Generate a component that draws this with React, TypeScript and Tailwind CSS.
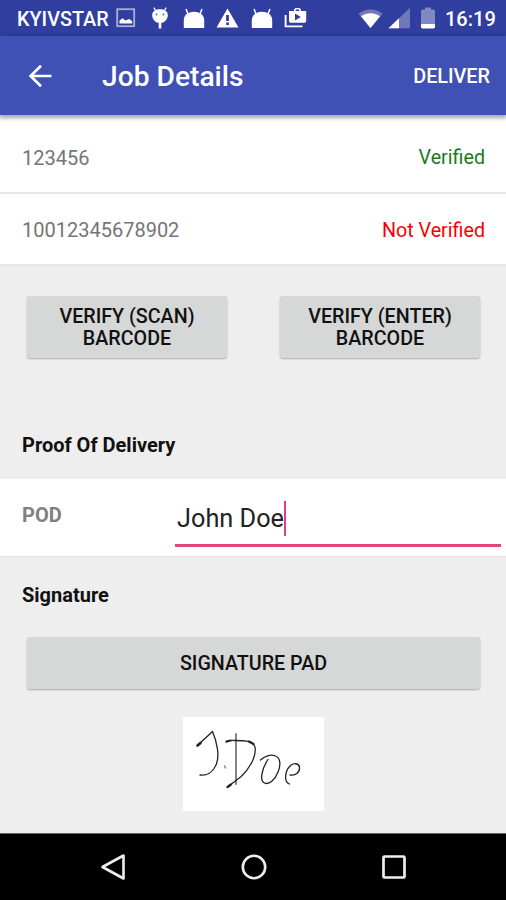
import { ReactNode } from "react";

type Parcel = {
  code: string;
  verified: boolean;
};

const parcels: Parcel[] = [
  { code: "123456", verified: true },
  { code: "10012345678902", verified: false },
];

const AndroidIcon = () => (
  <svg width="22" height="22" viewBox="0 0 22 22" fill="#fff">
    <path d="M.8 21V13.5C.8 8.300 4.500 4.800 11 4.800s10.200 3.500 10.200 8.700V21z" />
    <path d="M5.200 7.500 3 2M16.800 7.500 19 2" stroke="#fff" strokeWidth="1.5" />
  </svg>
);

const StatusBar = () => (
  <div className="flex h-9 items-center bg-[#303f9f] text-white">
    <span className="ml-[17px] w-[99px] whitespace-nowrap pt-[3px] text-[19.8px] font-medium leading-[33px]">
      KYIVSTAR
    </span>
    {/* Screenshot */}
    <svg width="20" height="20" viewBox="0 0 20 20">
      <rect x="1.2" y="1.2" width="17" height="17" fill="none" stroke="#a9afd8" strokeWidth="1.8" />
      <path d="M3.5 15.5v-3l3-2.3 3 2.3 3.7-1.5 3 2.3v2.2z" fill="#fff" />
    </svg>
    {/* USB debugging */}
    <svg className="ml-[15px]" width="18" height="24" viewBox="0 0 18 24">
      <path d="M4.600 4.500 2.800 1.600M13.400 4.500 15.200 1.600" stroke="#fff" strokeWidth="1.3" />
      <path
        d="M1.200 9C1.200 5 4.600 3.200 9 3.200S16.800 5 16.800 9c0 4.500-3.500 8-7.800 8s-7.800-3.500-7.800-8z"
        fill="#fff"
      />
      <path d="M9 16v6.500" stroke="#fff" strokeWidth="2.6" />
      <circle cx="5.500" cy="8.500" r="1" fill="#5b67b2" />
      <circle cx="12.500" cy="8.500" r="1" fill="#5b67b2" />
    </svg>
    <span className="ml-[14px]">
      <AndroidIcon />
    </span>
    {/* Warning */}
    <svg className="ml-[11px]" width="23" height="20" viewBox="0 0 23 20">
      <path d="M11.5.5 22.5 19.5H.5z" fill="#fff" />
      <path d="M11.5 7v6M11.5 14.500v2.600" stroke="#303f9f" strokeWidth="2.8" />
    </svg>
    <span className="ml-[12px]">
      <AndroidIcon />
    </span>
    {/* Play store update */}
    <svg className="-mt-px ml-[11px]" width="23" height="21" viewBox="0 0 23 21">
      <path
        d="M5 4h5V2.5L11.5 1h4L17 2.5V4h5.2v10.5L21 15.8H6.2L5 14.5zm6.7 0h3.6V2.6h-3.6zM11 6.4v7l5.8-3.5z"
        fill="#fff"
        fillRule="evenodd"
      />
      <path d="M1.6 8v11.4H18.5" fill="none" stroke="#fff" strokeWidth="1.9" />
    </svg>
    {/* Wifi */}
    <svg className="ml-[51px]" width="25" height="19" viewBox="0 0 25 19">
      <path d="M.3 4.8C7.5-.9 17.5-.9 24.7 4.8L12.5 19z" fill="#7078ba" />
      <path d="M3 7.300C8.800 3.300 16.200 3.300 22 7.300L12.5 19z" fill="#fff" />
    </svg>
    {/* Signal */}
    <svg className="ml-[5px]" width="22" height="22" viewBox="0 0 22 22">
      <path d="M22 .7v20.6H.5z" fill="#7078ba" />
      <path d="M11 11.2v10.1H.5z" fill="#fff" />
    </svg>
    {/* Battery */}
    <svg className="ml-[11px]" width="14" height="22" viewBox="0 0 14 22">
      <path d="M0 3.5 1.2 2.4H4V.5h6v1.9h2.8L14 3.5v14H0z" fill="#8088c3" />
      <path d="M0 17h14v3.3L12.8 21.4H1.2L0 20.3z" fill="#fff" />
    </svg>
    <span className="ml-[10px] whitespace-nowrap pt-[3px] text-[20px] font-medium leading-[33px]">
      16:19
    </span>
  </div>
);

const AppBar = () => (
  <header className="relative z-10 flex h-[79px] items-center bg-[#3f51b5] pl-[28px] pr-4 text-white shadow-[0_2px_4px_1px_rgba(0,0,0,0.35)]">
    <svg width="24" height="24" viewBox="0 0 24 24" fill="none" stroke="#fff" strokeWidth="2.7">
      <path d="M23.5 12H3M13 1.8 2.6 12 13 22.2" />
    </svg>
    <h1 className="ml-[50px] pt-[3px] text-[28.2px] font-medium">Job Details</h1>
    <button className="ml-auto pt-[3px] text-[19.8px] font-medium">DELIVER</button>
  </header>
);

const ParcelRow = ({ code, verified }: Parcel) => (
  <li className="flex h-[72px] items-center justify-between border-b-2 border-[#e6e6e6] bg-white pl-[22px] pr-[21px] pt-[2px] text-[20px] first:h-[79px] first:pt-[8px]">
    <span className="text-[#757575]">{code}</span>
    {verified ? (
      <span className="pt-px text-[19.700px] text-[#1b7a1f]">Verified</span>
    ) : (
      <span className="pt-px text-[19.700px] text-[#f80000]">Not Verified</span>
    )}
  </li>
);

const RaisedButton = ({ children }: { children: ReactNode }) => (
  <button className="h-full w-full rounded-[3px] bg-[#d6d7d7] pt-[2px] text-[19.700px] font-medium leading-[22.5px] text-[#111] shadow-[0_1px_2px_rgba(0,0,0,0.28)]">
    {children}
  </button>
);

const SignatureImage = () => (
  <svg
    className="mx-auto mt-[28px] block bg-white"
    width="141"
    height="94"
    viewBox="0 0 141 94"
    fill="none"
    stroke="#222"
    strokeWidth="1.3"
    strokeLinecap="round"
    strokeLinejoin="round"
  >
    <path d="M15 28 29.5 14.5C34 25 37 39 33 48c-3 7-9 11-16 10" />
    <path d="m14.5 28.5 3-2.6" strokeWidth="2.6" />
    <path d="m41.5 49 1 2" stroke="#777" />
    <path d="M53 17v50" stroke="#777" strokeWidth="1.8" />
    <path d="M43.5 25c3-2 5-1.500 8-1.500C63 23.500 71 24 72.200 31c1 10-7 22-14 28.500L44.500 70" />
    <path d="m44.500 70 3.500-2.500M43.500 24.500l4-1M66 24.500l4.500 2.500" strokeWidth="2.200" />
    <path d="M77.500 43c4-4 10-6 15-4 5 2 5.500 9 2.500 16-3 8-9 13-13.500 11-5-2-3-14 3.500-23.500" />
    <path d="M107 58c6 1 10-3 9.500-7.500-.4-4.500-6-5-9.500-1.500-5 5-6.500 16-.5 18" />
  </svg>
);

const NavBar = () => (
  <nav className="flex h-[67px] items-center justify-between border-t border-[#666] bg-black pl-[100px] pr-[99px]">
    <svg width="26" height="30" viewBox="0 0 26 30" fill="none" stroke="#eee" strokeWidth="2.6">
      <path d="M23.500 3.500v23L2.500 15z" strokeLinejoin="round" />
    </svg>
    <svg width="26" height="26" viewBox="0 0 26 26" fill="none" stroke="#eee" strokeWidth="2.6">
      <circle cx="13" cy="13" r="11.200" />
    </svg>
    <svg width="26" height="26" viewBox="0 0 26 26" fill="none" stroke="#eee" strokeWidth="2.7">
      <rect x="2.500" y="2.500" width="21" height="21" rx="1" />
    </svg>
  </nav>
);

const App = () => {
  return (
    <div className="flex h-[900px] w-[506px] flex-col overflow-hidden bg-[#eee] font-['Roboto',sans-serif]">
      <StatusBar />
      <AppBar />

      <main className="flex-1">
        <ul>
          {parcels.map((parcel) => (
            <ParcelRow key={parcel.code} {...parcel} />
          ))}
        </ul>

        <div className="mt-[30px] grid h-[62px] grid-cols-2 gap-[53px] pl-[27px] pr-[26px]">
          <RaisedButton>
            VERIFY (SCAN)
            <br />
            BARCODE
          </RaisedButton>
          <RaisedButton>
            VERIFY (ENTER)
            <br />
            BARCODE
          </RaisedButton>
        </div>

        {/* Proof of delivery */}
        <h2 className="mt-[72px] pl-[22px] text-[20px] font-bold leading-[30px] text-[#111]">
          Proof Of Delivery
        </h2>
        <div className="mt-[19px] flex h-[78px] border-b border-[#e4e4e4] bg-white pr-[5px]">
          <span className="w-[175px] pl-[22px] pt-[21px] text-[20px] font-bold leading-[30px] text-[#808080]">
            POD
          </span>
          <div className="flex h-[68px] flex-1 items-center border-b-[3px] border-[#e6447f] pl-[2px] pt-[14px] text-[25.300px] text-[#222]">
            John Doe
            <span className="h-[35px] w-[2px] bg-[#ea3a7c]" />
          </div>
        </div>

        <h2 className="mt-[23px] pl-[22px] text-[20px] font-bold leading-[30px] text-[#111]">
          Signature
        </h2>
        <div className="mt-[27px] h-[52px] pl-[27px] pr-[26px]">
          <RaisedButton>SIGNATURE PAD</RaisedButton>
        </div>
        <SignatureImage />
      </main>

      <NavBar />
    </div>
  );
};

export default App;
